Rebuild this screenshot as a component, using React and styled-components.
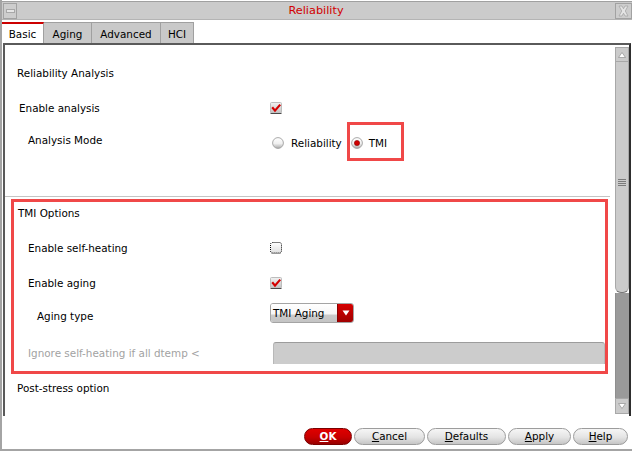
import React from 'react';
import styled, { createGlobalStyle } from 'styled-components';

const Global = createGlobalStyle`
  html, body { margin: 0; padding: 0; background: #fff; }
  body { font-family: "DejaVu Sans", Verdana, sans-serif; font-size: 10.4px; color: #000; }
  * { box-sizing: border-box; }
`;

const Window = styled.div`
  width: 632px;
  height: 451px;
  border-left: 2px solid #a4a4a4;
  border-bottom: 2px solid #a4a4a4;
  background: #fff;
  display: flex;
  flex-direction: column;
  overflow: hidden;
`;

const TitleBar = styled.div`
  margin-top: 1px;
  height: 19px;
  border-top: 1px solid #a0a0a0;
  border-bottom: 1px solid #b4b4b4;
  background: #cbcbcb;
  display: flex;
  align-items: stretch;
  padding-top: 1px;
`;

const TitleButton = styled.div`
  width: ${p => p.$w}px;
  margin-left: ${p => p.$ml || 0}px;
  border: 1px solid #a2a2a2;
  background: #cdcdcd;
  display: flex;
  align-items: center;
  justify-content: center;
`;

const Dash = styled.div`
  width: 9px;
  height: 4px;
  border: 1px solid #a8a8a8;
  background: #e6e6e6;
`;

const Title = styled.div`
  flex: 1;
  text-align: center;
  color: #d20000;
  font-size: 11.3px;
  line-height: 16px;
`;

const TabBar = styled.div`
  margin-top: 2px;
  height: 21px;
  display: flex;
`;

const Tab = styled.div`
  height: 21px;
  width: ${p => p.$w}px;
  display: flex;
  align-items: center;
  justify-content: center;
  background: ${p => (p.$active ? '#fff' : '#c9c9c9')};
  border-top: ${p => (p.$active ? '2px solid #cc0000' : '1px solid #a0a0a0')};
  border-right: 1px solid #a0a0a0;
  padding-top: ${p => (p.$active ? 0 : 1)}px;
`;

const Panel = styled.div`
  margin-left: 1px;
  width: 628px;
  height: 373px;
  border-top: 2px solid #5a5a5a;
  border-left: 2px solid #5a5a5a;
  border-right: 2px solid #2e2e2e;
  display: flex;
`;

const Content = styled.div`
  width: 610px;
  height: 371px;
  overflow: hidden;
  display: flex;
  flex-direction: column;
`;

const Section = styled.div`
  height: ${p => p.$h}px;
  display: flex;
  flex-direction: column;
`;

const Heading = styled.div`
  height: ${p => p.$h}px;
  display: flex;
  align-items: center;
  padding-left: ${p => p.$indent}px;
`;

const Row = styled.div`
  height: ${p => p.$h}px;
  margin-top: ${p => p.$mt || 0}px;
  display: grid;
  grid-template-columns: ${p => p.$labelCol}px 1fr;
  align-items: center;
`;

const Label = styled.div`
  padding-left: ${p => p.$indent}px;
  margin-bottom: ${p => p.$lift || 0}px;
  margin-top: ${p => p.$drop || 0}px;
  color: ${p => (p.$muted ? '#a2a2a2' : '#000')};
  white-space: nowrap;
`;

const Controls = styled.div`
  display: flex;
  align-items: center;
  height: 100%;
`;

const RadioOption = styled.label`
  display: flex;
  align-items: center;
  gap: ${p => p.$gap}px;
  margin-left: ${p => p.$ml || 0}px;
  margin-top: 3px;
`;

const Highlight = styled.div`
  height: 39px;
  margin-left: 5px;
  padding: 0 14px 0 1px;
  border: 3px solid #f04848;
  display: flex;
  align-items: center;
`;

const Separator = styled.div`
  width: 605px;
  height: 1px;
  background: #c4c4c4;
`;

const OptionsBox = styled.div`
  margin: 2px 0 0 6px;
  width: 597px;
  height: 175px;
  border: 3px solid #f04848;
  display: flex;
  flex-direction: column;
`;

const Dropdown = styled.div`
  width: 84px;
  height: 20px;
  border: 1px solid #a4a4a4;
  border-radius: 3px;
  display: flex;
  overflow: hidden;
`;

const DropText = styled.div`
  flex: 1;
  padding-left: 2px;
  line-height: 18px;
  background: linear-gradient(#ffffff 0%, #f6f6f6 55%, #cacaca 62%, #c4c4c4 100%);
`;

const DropArrow = styled.div`
  width: 16px;
  background: linear-gradient(#d60000, #a00000);
  border-left: 1px solid #8a0000;
  display: flex;
  align-items: center;
  justify-content: center;
`;

const Input = styled.div`
  margin-left: 3px;
  height: 22px;
  background: #cccccc;
  border-top: 1px solid #9c9c9c;
  border-left: 1px solid #b8b8b8;
  border-right: 1px solid #b8b8b8;
  border-radius: 3px 3px 0 0;
`;

const Scrollbar = styled.div`
  width: 14px;
  margin: 2px 0;
  display: flex;
  flex-direction: column;
`;

const ScrollArrow = styled.div`
  height: ${p => p.$h}px;
  background: #cbcbcb;
  border: 1px solid #a8a8a8;
  display: flex;
  align-items: center;
  justify-content: center;
`;

const Thumb = styled.div`
  height: 231px;
  background: #cbcbcb;
  border-left: 1px solid #a8a8a8;
  border-right: 1px solid #a8a8a8;
  border-bottom: 1px solid #777;
  border-radius: 0 0 6px 6px;
  display: flex;
  flex-direction: column;
  align-items: center;
  padding-top: 117px;
  gap: 1px;
`;

const Grip = styled.div`
  width: 8px;
  height: 1px;
  background: #7a7a7a;
`;

const Track = styled.div`
  flex: 1;
  background: #9a9a9a;
  border-left: 1px solid #8e8e8e;
`;

const ButtonBar = styled.div`
  flex: 1;
  display: flex;
  justify-content: flex-end;
  align-items: flex-start;
  gap: 2px;
  padding: 12px 4px 0 0;
`;

const Button = styled.button`
  width: ${p => p.$w}px;
  height: 17px;
  padding: 0;
  border-radius: 9px;
  font-family: inherit;
  font-size: 10.4px;
  line-height: 15px;
  border: 1px solid ${p => (p.$primary ? '#7a0000' : '#9c9c9c')};
  color: ${p => (p.$primary ? '#fff' : '#000')};
  font-weight: ${p => (p.$primary ? 'bold' : 'normal')};
  background: ${p =>
    p.$primary
      ? 'linear-gradient(#e00000 0%, #c80000 55%, #980000 100%)'
      : 'linear-gradient(#f6f6f6 0%, #e4e4e4 55%, #c6c6c6 100%)'};
`;

const U = styled.span`
  text-decoration: underline;
`;

function Checkbox({ checked }) {
  return (
    <svg width="12" height="12" viewBox="0 0 12 12">
      <defs>
        <linearGradient id={checked ? 'cbon' : 'cboff'} x1="0" y1="0" x2="0" y2="1">
          <stop offset="0" stopColor={checked ? '#f2f2f2' : '#ffffff'} />
          <stop offset="1" stopColor={checked ? '#c2c2c2' : '#e0e0e0'} />
        </linearGradient>
      </defs>
      {checked ? (
        <>
          <rect x="0.5" y="0.5" width="11" height="10.5" rx="1" fill="url(#cbon)" stroke="#bdbdbd" />
          <line x1="0.5" y1="11.5" x2="11.5" y2="11.5" stroke="#4a4a4a" />
          <path d="M2.2 5.3 L5 8.6 L10.2 2.6" fill="none" stroke="#d40000" strokeWidth="2.2" />
        </>
      ) : (
        <>
          <rect x="0.5" y="0.5" width="11" height="10.5" rx="2" fill="url(#cboff)" stroke="#000" strokeDasharray="1 1" />
          <line x1="1.5" y1="11.5" x2="10.5" y2="11.5" stroke="#9a9a9a" />
        </>
      )}
    </svg>
  );
}

function Radio({ on }) {
  return (
    <svg width="12" height="12" viewBox="0 0 12 12">
      <defs>
        <linearGradient id="rg" x1="0" y1="0" x2="0" y2="1">
          <stop offset="0" stopColor="#ffffff" />
          <stop offset="0.55" stopColor="#f0f0f0" />
          <stop offset="1" stopColor="#a8a8a8" />
        </linearGradient>
      </defs>
      <circle cx="6" cy="6" r="5.4" fill="url(#rg)" stroke="#a0a0a0" strokeWidth="0.9" />
      {on && <circle cx="6" cy="6" r="2.6" fill="#d00000" stroke="#8a0000" strokeWidth="0.6" />}
    </svg>
  );
}

function Tri({ down, color = '#fff', stroke = 'none' }) {
  return (
    <svg width="8" height="6" viewBox="0 0 8 6">
      <path d={down ? 'M0.5 0.5 L7.5 0.5 L4 5.5 Z' : 'M0.5 5.5 L7.5 5.5 L4 0.5 Z'} fill={color} stroke={stroke} strokeWidth="0.8" />
    </svg>
  );
}

function CloseGlyph() {
  return (
    <svg width="11" height="12" viewBox="0 0 11 12">
      <path
        d="M1 1 L4 1 L5.5 3.8 L7 1 L10 1 L7.3 6 L10 11 L7 11 L5.5 8.2 L4 11 L1 11 L3.7 6 Z"
        fill="#e4e4e4"
        stroke="#a6a6a6"
        strokeWidth="0.8"
      />
    </svg>
  );
}

export default function App() {
  return (
    <>
      <Global />
      <Window>
        <TitleBar>
          <TitleButton $w={14} $ml={1}>
            <Dash />
          </TitleButton>
          <Title>Reliability</Title>
          <TitleButton $w={17}>
            <CloseGlyph />
          </TitleButton>
        </TitleBar>

        <TabBar>
          <Tab $active $w={42}>Basic</Tab>
          <Tab $w={48}>Aging</Tab>
          <Tab $w={69}>Advanced</Tab>
          <Tab $w={33}>HCI</Tab>
        </TabBar>

        <Panel>
          <Content>
            <Section $h={151}>
              <Heading $h={56} $indent={12}>Reliability Analysis</Heading>
              <Row $h={14} $labelCol={265}>
                <Label $indent={14}>Enable analysis</Label>
                <Controls>
                  <Checkbox checked />
                </Controls>
              </Row>
              <Row $h={39} $mt={7} $labelCol={265}>
                <Label $indent={23} $lift={3}>Analysis Mode</Label>
                <Controls>
                  <RadioOption $gap={7} $ml={2}>
                    <Radio />
                    <span>Reliability</span>
                  </RadioOption>
                  <Highlight>
                    <RadioOption $gap={6}>
                      <Radio on />
                      <span>TMI</span>
                    </RadioOption>
                  </Highlight>
                </Controls>
              </Row>
            </Section>
            <Separator />

            <OptionsBox>
              <Heading $h={22} $indent={4}>TMI Options</Heading>
              <Row $h={34} $mt={7} $labelCol={256}>
                <Label $indent={14}>Enable self-heating</Label>
                <Controls>
                  <Checkbox />
                </Controls>
              </Row>
              <Row $h={35} $labelCol={256}>
                <Label $indent={14}>Enable aging</Label>
                <Controls>
                  <Checkbox checked />
                </Controls>
              </Row>
              <Row $h={26} $labelCol={256}>
                <Label $indent={23} $drop={6}>Aging type</Label>
                <Controls>
                  <Dropdown>
                    <DropText>TMI Aging</DropText>
                    <DropArrow>
                      <Tri down />
                    </DropArrow>
                  </Dropdown>
                </Controls>
              </Row>
              <Row $h={22} $mt={16} $labelCol={256}>
                <Label $indent={14} $muted>Ignore self-heating if all dtemp &lt;</Label>
                <Input />
              </Row>
            </OptionsBox>

            <Heading $h={28} $indent={12}>Post-stress option</Heading>
          </Content>

          <Scrollbar>
            <ScrollArrow $h={15}>
              <Tri color="#fff" stroke="#9a9a9a" />
            </ScrollArrow>
            <Thumb>
              <Grip />
              <Grip />
              <Grip />
              <Grip />
            </Thumb>
            <Track />
            <ScrollArrow $h={16}>
              <Tri down color="#fff" stroke="#9a9a9a" />
            </ScrollArrow>
          </Scrollbar>
        </Panel>

        <ButtonBar>
          <Button $primary $w={48}><U>O</U>K</Button>
          <Button $w={71}><U>C</U>ancel</Button>
          <Button $w={79}><U>D</U>efaults</Button>
          <Button $w={63}><U>A</U>pply</Button>
          <Button $w={55}><U>H</U>elp</Button>
        </ButtonBar>
      </Window>
    </>
  );
}
